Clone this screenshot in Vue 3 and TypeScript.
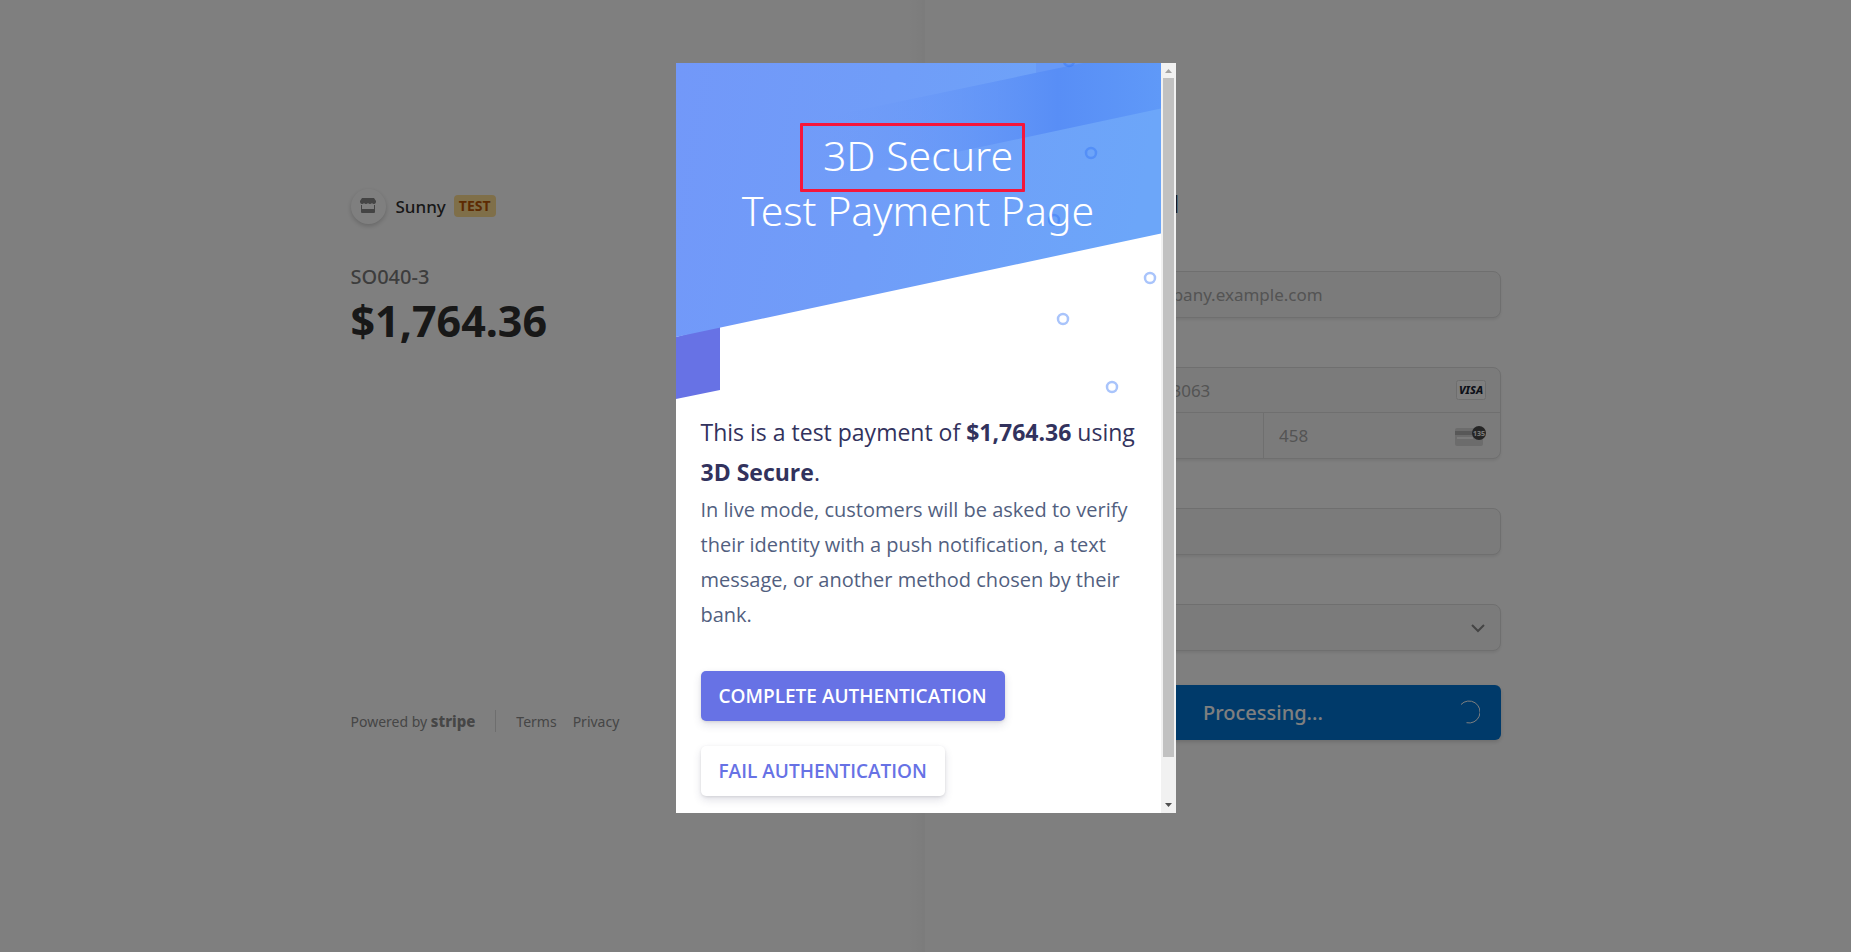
<script setup lang="ts">
import { ref } from 'vue'

const amount = '$1,764.36'
const email = ref('invoice@mycompany.example.com')
const cardNumber = ref('4000 0000 0000 3063')
const expiry = ref('12 / 34')
const cvc = ref('458')
const holder = ref('')
const country = ref('US')

interface Dot { x: number; y: number }
const dots: Dot[] = [
  { x: 393, y: -2 },
  { x: 415, y: 90 },
  { x: 378, y: 157 },
  { x: 474, y: 215 },
  { x: 387, y: 256 },
  { x: 436, y: 324 },
]
</script>

<template>
  <div class="page">
    <main class="checkout">
      <section class="summary">
        <header class="merchant">
          <span class="avatar">
            <svg width="16" height="16" viewBox="0 0 16 16" aria-hidden="true">
              <path d="M2 0h12l2 3v1a2.2 2.2 0 0 1-4 1 2.4 2.4 0 0 1-4 0 2.4 2.4 0 0 1-4 0 2.2 2.2 0 0 1-4-1V3z" />
              <path d="M1 7h1v4h12V7h1v7a1 1 0 0 1-1 1H2a1 1 0 0 1-1-1z" />
            </svg>
          </span>
          <span class="merchant-name">Sunny</span>
          <span class="badge">TEST</span>
        </header>
        <p class="order">SO040-3</p>
        <p class="total">{{ amount }}</p>
        <footer class="legal">
          <span class="powered">Powered by <b>stripe</b></span>
          <span class="rule"></span>
          <a href="#terms">Terms</a>
          <a href="#privacy">Privacy</a>
        </footer>
      </section>

      <form class="payment" @submit.prevent>
        <h1>Pay with card</h1>
        <label for="email">Email</label>
        <input id="email" v-model="email" class="field" type="email" />

        <label for="card">Card information</label>
        <div class="card-group">
          <div class="cell wide">
            <input id="card" v-model="cardNumber" />
            <svg class="brand" width="30" height="20" viewBox="0 0 30 20" aria-hidden="true">
              <rect x="0.5" y="0.5" width="29" height="19" rx="2" fill="#fff" stroke="#dcdcdc" />
              <text x="15" y="14" text-anchor="middle" class="visa">VISA</text>
            </svg>
          </div>
          <div class="cell">
            <input v-model="expiry" aria-label="Expiry date" />
          </div>
          <div class="cell">
            <input v-model="cvc" aria-label="CVC" />
            <svg class="brand" width="31" height="20" viewBox="0 0 31 20" aria-hidden="true">
              <rect x="0" y="2" width="28" height="18" rx="2" fill="#d8d8d8" />
              <rect x="0" y="5" width="28" height="4" fill="#b0b0b0" />
              <rect x="2" y="11" width="16" height="2" fill="#f7f7f7" />
              <circle cx="24" cy="7" r="7" fill="#4a4a4a" />
              <text x="24" y="10" text-anchor="middle" class="digits">135</text>
            </svg>
          </div>
        </div>

        <label for="holder">Name on card</label>
        <input id="holder" v-model="holder" class="field" />

        <label for="country">Country or region</label>
        <div class="select-wrap">
          <select id="country" v-model="country" class="field">
            <option value="US">United States</option>
            <option value="CA">Canada</option>
          </select>
          <svg class="chevron" width="14" height="9" viewBox="0 0 14 9" aria-hidden="true">
            <path d="M1 1l6 6 6-6" />
          </svg>
        </div>

        <button class="pay" type="submit">
          Processing...
          <svg class="spinner" width="24" height="24" viewBox="0 0 24 24" aria-hidden="true">
            <path d="M5 4.5A11 11 0 1 1 10.5 22.7" />
          </svg>
        </button>
      </form>
    </main>

    <div class="overlay">
      <div class="dialog" role="dialog" aria-modal="true" aria-labelledby="dialog-title">
        <div class="content">
          <div class="hero">
            <svg class="backdrop" viewBox="0 0 485 340" aria-hidden="true">
              <defs>
                <linearGradient id="sky" x1="0" y1="0" x2="1" y2="0.1">
                  <stop offset="0" stop-color="#7298f9" />
                  <stop offset="0.45" stop-color="#709df8" />
                  <stop offset="1" stop-color="#6ca6f9" />
                </linearGradient>
                <linearGradient id="band" gradientUnits="userSpaceOnUse" x1="140" y1="0" x2="485" y2="0">
                  <stop offset="0" stop-color="#709bf8" stop-opacity="0" />
                  <stop offset="0.7" stop-color="#588ef6" />
                  <stop offset="1" stop-color="#5f99f8" />
                </linearGradient>
              </defs>
              <path d="M0 274V336L44 327V262z" fill="#6772e5" />
              <path d="M0 0H485V170.5L0 274z" fill="url(#sky)" />
              <path d="M360 0H485V10H360z" fill="#6799f7" />
              <path d="M140 56L407 0H485V45.5L140 119z" fill="url(#band)" />
              <circle v-for="dot in dots" :key="dot.y" :cx="dot.x" :cy="dot.y" r="5" class="dot" />
            </svg>
            <h2 id="dialog-title">3D Secure<br />Test Payment Page</h2>
          </div>
          <div class="message">
            <p class="lead">This is a test payment of <b>{{ amount }}</b> using <b>3D Secure</b>.</p>
            <p class="note">In live mode, customers will be asked to verify their identity with a push notification, a text message, or another method chosen by their bank.</p>
            <button class="action primary" type="button">COMPLETE AUTHENTICATION</button>
            <button class="action" type="button">FAIL AUTHENTICATION</button>
          </div>
        </div>
        <div class="scrollbar" aria-hidden="true">
          <svg width="15" height="15" viewBox="0 0 15 15"><path d="M4 10h7L7.5 6z" fill="#a3a3a3" /></svg>
          <div class="thumb"></div>
          <svg class="down" width="15" height="15" viewBox="0 0 15 15"><path d="M4 5h7L7.5 9z" fill="#505050" /></svg>
        </div>
        <div class="highlight"></div>
      </div>
    </div>
  </div>
</template>

<style>
body {
  margin: 0;
  background: #fff;
}
</style>

<style scoped>
* {
  box-sizing: border-box;
}
.page {
  position: relative;
  min-height: 100vh;
  overflow: hidden;
  font-family: "Noto Sans", "Open Sans", sans-serif;
  color: #303030;
  background: linear-gradient(to right, #fff calc(50% - 18px), #f8f8f8 50%, #fff 50%);
}
.checkout {
  display: grid;
  grid-template-columns: 1fr 1fr;
  column-gap: 200px;
  width: 100%;
  max-width: 1150px;
  margin: 0 auto;
  padding-top: 188px;
}
.summary {
  display: flex;
  flex-direction: column;
}
.merchant {
  display: flex;
  align-items: center;
  height: 36px;
}
.avatar {
  display: flex;
  align-items: center;
  justify-content: center;
  width: 35px;
  height: 35px;
  margin-right: 10px;
  border-radius: 50%;
  box-shadow: 0 2px 5px rgba(0, 0, 0, 0.2);
}
.avatar svg {
  fill: #888;
}
.merchant-name {
  font-size: 17px;
  font-weight: 500;
}
.badge {
  margin-left: 8px;
  padding: 0 5px;
  border-radius: 4px;
  background: #ffde92;
  color: #bb5504;
  font-size: 14px;
  font-weight: 700;
  line-height: 22px;
}
.order {
  margin: 40px 0 0;
  color: #7a7a7a;
  font-size: 20px;
  font-weight: 500;
  line-height: 26px;
}
.total {
  margin: 0;
  font-size: 43px;
  font-weight: 700;
  line-height: 62px;
}
.legal {
  display: flex;
  align-items: center;
  gap: 16px;
  height: 22px;
  margin-top: auto;
  margin-bottom: 8px;
  color: #8c8c8c;
  font-size: 14px;
}
.legal a {
  color: inherit;
  text-decoration: none;
}
.powered b {
  font-size: 15px;
  font-weight: 800;
  line-height: 20px;
}
.rule {
  width: 1px;
  height: 22px;
  margin: 0 4px;
  background: #dcdcdc;
}
.payment {
  display: flex;
  flex-direction: column;
}
h1 {
  margin: 0 0 34px;
  font-size: 24px;
  font-weight: 500;
  line-height: 32px;
}
label {
  height: 17px;
  margin-bottom: 6px;
  color: #7a7a7a;
  font-size: 14px;
  line-height: 17px;
}
h1 + label {
  margin-bottom: 0;
}
.field,
.card-group {
  margin-bottom: 26px;
  border: 1px solid #dedede;
  border-radius: 8px;
  background: #f7f7f7;
  box-shadow: 0 2px 3px rgba(0, 0, 0, 0.08);
}
.field,
.cell input {
  width: 100%;
  height: 47px;
  padding: 0 16px;
  color: #a8a8a8;
  font: inherit;
  font-size: 17px;
  outline: none;
}
.card-group {
  display: grid;
  grid-template-columns: 1fr 1fr;
}
.cell {
  display: flex;
  align-items: center;
  height: 45px;
}
.cell + .cell + .cell {
  border-left: 1px solid #dedede;
}
.cell.wide {
  grid-column: 1 / 3;
  border-bottom: 1px solid #dedede;
}
.cell input {
  flex: 1;
  min-width: 0;
  height: 40px;
  padding: 0 15px;
  border: 0;
  background: none;
}
.brand {
  flex: none;
  margin-right: 14px;
}
.visa {
  fill: #191e32;
  font-size: 11px;
  font-style: italic;
  font-weight: 800;
}
.digits {
  fill: #f7f7f7;
  font-size: 7px;
  font-weight: 700;
}
.select-wrap {
  position: relative;
  display: flex;
}
.select-wrap .field {
  appearance: none;
  margin-bottom: 34px;
}
.chevron {
  position: absolute;
  top: 20px;
  right: 16px;
  fill: none;
  stroke: #888;
  stroke-width: 2;
}
.pay {
  position: relative;
  height: 55px;
  border: 0;
  border-radius: 6px;
  background: #0074d4;
  color: #fff;
  font: inherit;
  font-size: 20px;
  font-weight: 500;
  box-shadow: 0 2px 4px rgba(0, 0, 0, 0.15);
}
.spinner {
  position: absolute;
  top: 15px;
  right: 21px;
  fill: none;
  stroke: #fff;
}
.overlay {
  position: absolute;
  inset: 0;
  display: flex;
  align-items: flex-start;
  justify-content: center;
  padding-top: 63px;
  background: rgba(0, 0, 0, 0.5);
}
.dialog {
  position: relative;
  display: flex;
  width: 500px;
  max-width: 100%;
  height: 750px;
  background: #fff;
  font-family: "Open Sans", "Noto Sans", sans-serif;
}
.content {
  flex: 1;
  overflow: hidden;
}
.hero {
  position: relative;
  height: 349px;
}
.backdrop {
  display: block;
  width: 100%;
}
.dot {
  fill: none;
  stroke: rgba(50, 115, 245, 0.42);
  stroke-width: 2.5;
}
h2 {
  position: absolute;
  top: 65px;
  right: 0;
  left: 0;
  margin: 0;
  color: #fff;
  font-family: "Noto Sans", "Open Sans", sans-serif;
  font-size: 41px;
  font-weight: 300;
  line-height: 55px;
  text-align: center;
}
.message {
  display: flex;
  flex-direction: column;
  align-items: flex-start;
  padding: 0 25px;
}
.lead {
  margin: 0;
  color: #32325d;
  font-size: 23px;
  font-weight: 500;
  line-height: 40px;
}
.note {
  margin: 0 0 39px;
  color: #525f7f;
  font-size: 20px;
  line-height: 35px;
}
.action {
  height: 50px;
  margin-bottom: 25px;
  padding: 0 18px;
  border: 0;
  border-radius: 5px;
  background: #fff;
  color: #6772e5;
  font: inherit;
  font-size: 19px;
  font-weight: 600;
  box-shadow: 0 4px 8px rgba(50, 50, 93, 0.14), 0 1px 3px rgba(0, 0, 0, 0.1);
}
.primary {
  background: #6772e5;
  color: #fff;
}
.scrollbar {
  display: flex;
  flex-direction: column;
  width: 15px;
  background: #f1f1f1;
}
.scrollbar svg {
  flex: none;
}
.thumb {
  height: 679px;
  margin: 0 2px;
  background: #c1c1c1;
}
.down {
  margin-top: auto;
}
.highlight {
  position: absolute;
  top: 60px;
  left: 124px;
  width: 225px;
  height: 69px;
  border: 3px solid #f5163b;
  border-radius: 1px;
}
</style>
